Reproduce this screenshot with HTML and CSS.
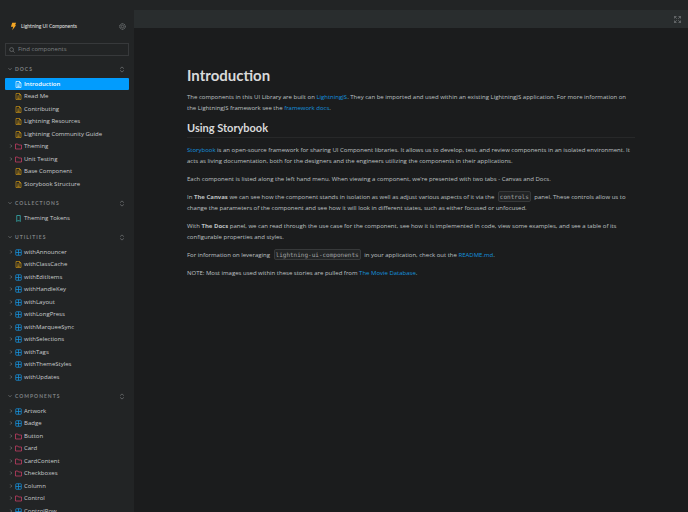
FILE: index.html
```html
<!DOCTYPE html>
<html lang="en">
<head>
<meta charset="utf-8">
<title>Introduction - Storybook</title>
<link rel="stylesheet" href="styles.css">
</head>
<body>
<svg class="defs" aria-hidden="true">
  <symbol id="doc" viewBox="0 0 14 14"><path d="M2 1h7l3 3v9H2zM9 1v3h3M4.500 6h5M4.500 8.500h5M4.500 11h5" fill="none" stroke="currentColor" stroke-width="1.300"/></symbol>
  <symbol id="folder" viewBox="0 0 14 14"><path d="M1 2h4.500l1.500 2h6v8H1z" fill="none" stroke="currentColor" stroke-width="1.400" stroke-linejoin="round"/></symbol>
  <symbol id="component" viewBox="0 0 14 14"><path d="M2.500 1.500h9a1 1 0 0 1 1 1v9a1 1 0 0 1-1 1h-9a1 1 0 0 1-1-1v-9a1 1 0 0 1 1-1zM7 1.500v11M1.500 7h11" fill="none" stroke="currentColor" stroke-width="1.500"/></symbol>
  <symbol id="bookmark" viewBox="0 0 14 14"><path d="M3.500 1h7v12L9 11.500H5L3.500 13z" fill="none" stroke="currentColor" stroke-width="1.500"/></symbol>
  <symbol id="right" viewBox="0 0 8 8"><path d="M2.500 1l3 3-3 3" fill="none" stroke="currentColor" stroke-width="1.400"/></symbol>
  <symbol id="down" viewBox="0 0 8 8"><path d="M1 2.500l3 3 3-3" fill="none" stroke="currentColor" stroke-width="1.400"/></symbol>
  <symbol id="expand" viewBox="0 0 14 14"><path d="M2.500 5L7 1l4.500 4M2.500 9L7 13l4.500-4" fill="none" stroke="currentColor" stroke-width="1.500"/></symbol>
</svg>
<div class="app">
  <aside class="sidebar">
    <header class="brand">
      <a href="#" class="brand-link">
        <svg class="bolt" viewBox="0 0 10 14" aria-hidden="true"><path d="M3 1h6L7.500 5H9L3 13l1.500-5.500H1z" fill="#f5a623"/></svg>
        <span>Lightning UI Components</span>
      </a>
      <button class="icon-button" aria-label="Settings"><svg viewBox="0 0 14 14"><g fill="none" stroke="currentColor"><circle cx="7" cy="7" r="5.500" stroke-width="2" stroke-dasharray="2.500 1"/><circle cx="7" cy="7" r="2.500" stroke-width="1.200"/></g></svg></button>
    </header>
    <label class="search">
      <svg viewBox="0 0 14 14" aria-hidden="true"><path d="M9.500 9.500L13 13M10.500 6a4.500 4.500 0 1 1-9 0 4.500 4.500 0 0 1 9 0z" fill="none" stroke="currentColor" stroke-width="1.300"/></svg>
      <input type="text" aria-label="Find components" placeholder="Find components">
    </label>
    <nav id="tree" class="tree" aria-label="Stories"></nav>
  </aside>
  <div class="main">
    <div class="toolbar"><button class="icon-button" aria-label="Go full screen"><svg viewBox="0 0 14 14"><path d="M1 5V1h4M9 1h4v4M13 9v4H9M5 13H1V9M1 1l4.500 4.500M13 1L8.500 5.500M13 13L8.500 8.500M1 13l4.500-4.500" fill="none" stroke="currentColor" stroke-width="1.300"/></svg></button></div>
    <main class="canvas">
      <article class="docs">
        <h1>Introduction</h1>
        <p>The components in this UI Library are built on <a href="#">LightningJS</a>. They can be imported and used within an existing LightningJS application. For more information on the LightningJS framework see the <a href="#">framework docs</a>.</p>
        <h2>Using Storybook</h2>
        <p><a href="#">Storybook</a> is an open-source framework for sharing UI Component libraries. It allows us to develop, test, and review components in an isolated environment. It acts as living documentation, both for the designers and the engineers utilizing the components in their applications.</p>
        <p>Each component is listed along the left hand menu. When viewing a component, we're presented with two tabs - Canvas and Docs.</p>
        <p>In <strong>The Canvas</strong> we can see how the component stands in isolation as well as adjust various aspects of it via the <code>controls</code> panel. These controls allow us to change the parameters of the component and see how it will look in different states, such as either focused or unfocused.</p>
        <p>With <strong>The Docs</strong> panel, we can read through the use case for the component, see how it is implemented in code, view some examples, and see a table of its configurable properties and styles.</p>
        <p>For information on leveraging <code>lightning-ui-components</code> in your application, check out the <a href="#">README.md</a>.</p>
        <p>NOTE: Most images used within these stories are pulled from <a href="#">The Movie Database</a>.</p>
      </article>
    </main>
  </div>
</div>
<script src="tree.js"></script>
</body>
</html>
```
FILE: styles.css
```css
* { box-sizing: border-box; }
body {
  margin: 0;
  background: #222425;
  color: #bfc1c3;
  font: 6px/11px "Open Sans", "Noto Sans", sans-serif;
}
.defs { display: none; }
.app { display: flex; height: 100vh; overflow: hidden; }
a { color: #1593df; text-decoration: none; }
svg { display: block; flex: none; }
button { padding: 0; border: 0; background: none; color: inherit; font: inherit; }
.icon-button { color: #7d8082; }
.icon-button svg { width: 7px; height: 7px; }

.sidebar { flex: 0 0 134px; padding: 20px 5px 0; overflow: hidden; }
.brand { display: flex; align-items: center; justify-content: space-between; height: 13px; padding: 0 3px 0 5px; }
.brand-link { display: flex; align-items: center; gap: 4px; color: #e6e6e6; font-family: Lato, sans-serif; font-size: 5px; }
.bolt { width: 7px; height: 9px; }
.search {
  display: flex; align-items: center; gap: 3px;
  height: 13px; margin: 10px 0 9px; padding: 0 3px;
  border: 1px solid #37393b; color: #85888a;
}
.search svg { width: 6px; height: 6px; }
.search input { flex: 1; min-width: 0; padding: 0; border: 0; outline: 0; background: none; color: inherit; font: inherit; }
.search input::placeholder { color: #7d8082; opacity: 1; }

.section { margin-bottom: 9px; }
.section-head { display: flex; align-items: center; justify-content: space-between; height: 8px; margin: 0 0 5px; padding: 0 4px 0 3px; color: #7f8284; }
.section-head h2 { margin: 0; font: inherit; }
.section-head h2 button { display: flex; align-items: center; gap: 3px; font-family: Lato, sans-serif; font-size: 5px; font-weight: 700; line-height: 8px; letter-spacing: 1px; text-transform: uppercase; }
.section-head h2 svg { width: 4px; height: 4px; }
.section-head .icon-button svg { width: 6px; height: 7px; }
.items { display: grid; grid-auto-rows: 12px 13px; margin: 0; padding: 0; list-style: none; }
.item { display: flex; align-items: center; gap: 2px; height: 12px; padding: 0 4px; color: #c9cbcd; white-space: nowrap; }
.item .arrow { width: 4px; height: 4px; color: #7d8082; }
.item .arrow.none { visibility: hidden; }
.item .kind { width: 7px; height: 7px; }
.doc { color: #d59a12; }
.folder { color: #d6406a; }
.component { color: #1593df; }
.bookmark { color: #37b6b6; }
.item.selected { border-radius: 1px; background: #029cfd; color: #fff; font-weight: 600; }
.item.selected .kind { color: #fff; }

.main { flex: 1; min-width: 0; display: flex; flex-direction: column; padding-top: 10px; }
.toolbar { flex: none; display: flex; align-items: center; justify-content: flex-end; height: 18px; padding: 0 7px; background: #292d2e; }
.canvas { flex: 1; min-height: 0; padding: 38px 50px; background: #1b1c1d; }
.docs { max-width: 448px; margin: 0 auto; }
h1 { margin: 0 0 8px; color: #d8d9da; font-family: Lato, sans-serif; font-size: 15px; line-height: 18px; }
.docs h2 { margin: 7px 0; padding-bottom: 2px; border-bottom: 1px solid #272829; color: #d8d9da; font-family: Lato, sans-serif; font-size: 11px; line-height: 14px; }
.docs p { margin: 0 0 7px; }
code { margin: 0 2px; padding: 1px; border: 1px solid #37393a; border-radius: 2px; background: #222425; color: #a0a2a3; font: 6px/7px "DejaVu Sans Mono", monospace; white-space: nowrap; }
```
FILE: tree.js
```js
const sections = [
  ["Docs", ["*doc:Introduction", "doc:Read Me", "doc:Contributing", "doc:Lightning Resources", "doc:Lightning Community Guide", "folder:Theming", "folder:Unit Testing", "doc:Base Component", "doc:Storybook Structure"]],
  ["Collections", ["bookmark:Theming Tokens"]],
  ["Utilities", ["component:withAnnouncer", "doc:withClassCache", "component:withEditItems", "component:withHandleKey", "component:withLayout", "component:withLongPress", "component:withMarqueeSync", "component:withSelections", "component:withTags", "component:withThemeStyles", "component:withUpdates"]],
  ["Components", ["component:Artwork", "component:Badge", "folder:Button", "folder:Card", "folder:CardContent", "folder:Checkboxes", "component:Column", "folder:Control", "component:ControlRow"]]
];
const icon = (id, cls) => `<svg class="${cls}" aria-hidden="true"><use href="#${id}"/></svg>`;
document.getElementById("tree").innerHTML = sections.map(([title, items]) => `
  <section class="section">
    <div class="section-head"><h2><button>${icon("down", "")}${title}</button></h2><button class="icon-button" aria-label="Expand all">${icon("expand", "")}</button></div>
    <ul class="items">${items.map(entry => {
      const selected = entry.startsWith("*");
      const [kind, name] = entry.replace("*", "").split(":");
      const leaf = kind === "doc" || kind === "bookmark";
      return `<li><a href="#" class="item${selected ? " selected" : ""}">${icon("right", leaf ? "arrow none" : "arrow")}${icon(kind, "kind " + kind)}<span>${name}</span></a></li>`;
    }).join("")}</ul>
  </section>`).join("");
```
